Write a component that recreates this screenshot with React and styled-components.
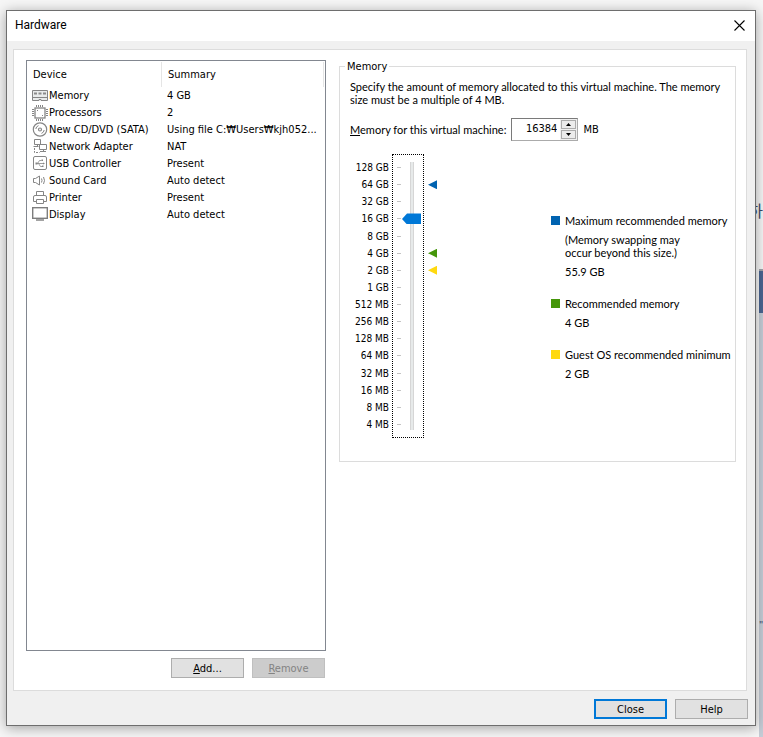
import React, { useState } from 'react'
import styled, { createGlobalStyle } from 'styled-components'

const GB = 1024

const devices = [
    { name: 'Memory', summary: '4 GB', icon: MemoryIcon },
    { name: 'Processors', summary: '2', icon: CpuIcon },
    { name: 'New CD/DVD (SATA)', summary: 'Using file C:₩Users₩kjh052...', icon: DiscIcon },
    { name: 'Network Adapter', summary: 'NAT', icon: NetworkIcon },
    { name: 'USB Controller', summary: 'Present', icon: UsbIcon },
    { name: 'Sound Card', summary: 'Auto detect', icon: SoundIcon },
    { name: 'Printer', summary: 'Present', icon: PrinterIcon },
    { name: 'Display', summary: 'Auto detect', icon: DisplayIcon },
]

// one entry per slider step, biggest on top
const steps = [
    { label: '128 GB' },
    { label: '64 GB', marker: '#0063b1' },
    { label: '32 GB' },
    { label: '16 GB' },
    { label: '8 GB' },
    { label: '4 GB', marker: '#45960a' },
    { label: '2 GB', marker: '#ffd90f' },
    { label: '1 GB' },
    { label: '512 MB' },
    { label: '256 MB' },
    { label: '128 MB' },
    { label: '64 MB' },
    { label: '32 MB' },
    { label: '16 MB' },
    { label: '8 MB' },
    { label: '4 MB' },
]

function App() {
    const [memory, setMemory] = useState(16 * GB)

    const changeMemory = (value) => setMemory(Math.min(128 * GB, Math.max(4, value)))

    return (
        <Desktop>
            <GlobalStyle />
            <Window>
                <TitleBar>
                    <Title>Hardware</Title>
                    <CloseIconButton aria-label="Close window">
                        <svg width="11" height="11" viewBox="0 0 11 11" stroke="#000" strokeWidth="1.1">
                            <path d="M0.5 0.5L10.5 10.5M10.5 0.5L0.5 10.5" />
                        </svg>
                    </CloseIconButton>
                </TitleBar>

                <Panel>
                    <DeviceColumn>
                        <DeviceList>
                            <DeviceTable>
                                <thead>
                                    <tr>
                                        <HeadCell $width={135}>Device</HeadCell>
                                        <HeadCell>Summary</HeadCell>
                                    </tr>
                                </thead>
                                <tbody>
                                    {devices.map(({ name, summary, icon: Icon }) => (
                                        <tr key={name}>
                                            <Cell>
                                                <DeviceName><Icon />{name}</DeviceName>
                                            </Cell>
                                            <Cell>{summary}</Cell>
                                        </tr>
                                    ))}
                                </tbody>
                            </DeviceTable>
                        </DeviceList>
                        <ButtonRow>
                            <Button><u>A</u>dd...</Button>
                            <Button disabled><u>R</u>emove</Button>
                        </ButtonRow>
                    </DeviceColumn>

                    <Group>
                        <legend>Memory</legend>
                        <Description>
                            Specify the amount of memory allocated to this virtual machine. The memory size must be a multiple of 4 MB.
                        </Description>
                        <MemoryRow>
                            <MemoryLabel htmlFor="memory"><u>M</u>emory for this virtual machine:</MemoryLabel>
                            <Spinner>
                                <SpinnerInput
                                    id="memory"
                                    value={memory}
                                    onChange={(e) => setMemory(Number(e.target.value) || 0)}
                                />
                                <SpinnerButtons>
                                    <SpinnerButton aria-label="Increase" onClick={() => changeMemory(memory + 4)}>
                                        <svg width="5" height="3" viewBox="0 0 5 3"><path d="M0 3L2.5 0L5 3Z" /></svg>
                                    </SpinnerButton>
                                    <SpinnerButton aria-label="Decrease" onClick={() => changeMemory(memory - 4)}>
                                        <svg width="5" height="3" viewBox="0 0 5 3"><path d="M0 0L2.5 3L5 0Z" /></svg>
                                    </SpinnerButton>
                                </SpinnerButtons>
                            </Spinner>
                            <span>MB</span>
                        </MemoryRow>

                        <MemoryBody>
                            <Scale>
                                <ScaleColumn $width={39} $align="flex-end">
                                    {steps.map(({ label }) => <ScaleItem key={label}>{label}</ScaleItem>)}
                                </ScaleColumn>
                                <SliderBox>
                                    <ScaleColumn>
                                        {steps.map(({ label }) => <ScaleItem key={label}><Tick /></ScaleItem>)}
                                    </ScaleColumn>
                                    <Slider
                                        type="range"
                                        min="2"
                                        max="17"
                                        step="1"
                                        aria-label="Memory size"
                                        value={Math.round(Math.log2(memory || 4))}
                                        onChange={(e) => setMemory(2 ** Number(e.target.value))}
                                    />
                                </SliderBox>
                                <ScaleColumn $width={10} $align="flex-end">
                                    {steps.map(({ label, marker }) => (
                                        <ScaleItem key={label}>{marker && <Marker $color={marker} />}</ScaleItem>
                                    ))}
                                </ScaleColumn>
                            </Scale>

                            <Hints>
                                <Hint>
                                    <HintTitle><Swatch $color="#0063b1" />Maximum recommended memory</HintTitle>
                                    <HintText>(Memory swapping may<br />occur beyond this size.)</HintText>
                                    <HintText>55.9 GB</HintText>
                                </Hint>
                                <Hint>
                                    <HintTitle><Swatch $color="#45960a" />Recommended memory</HintTitle>
                                    <HintText>4 GB</HintText>
                                </Hint>
                                <Hint>
                                    <HintTitle><Swatch $color="#ffd90f" />Guest OS recommended minimum</HintTitle>
                                    <HintText>2 GB</HintText>
                                </Hint>
                            </Hints>
                        </MemoryBody>
                    </Group>
                </Panel>

                <Footer>
                    <Button $primary>Close</Button>
                    <Button>Help</Button>
                </Footer>
            </Window>

            <Behind>
                <BehindPage><span>하</span></BehindPage>
                <BehindBar />
                <BehindBody>"</BehindBody>
            </Behind>
        </Desktop>
    )
}

export default App

function MemoryIcon() {
    return (
        <svg width="16" height="16" viewBox="0 0 16 16">
            <path d="M0.5 2.500h15v10h-6.500v-1h-2v1h-6.500z" fill="#e9ebeb" stroke="#858585" />
            <path d="M0.500 9.500h15" stroke="#858585" />
            <path d="M2 5.500h3M6.500 5.500h3M11 5.500h3" stroke="#8a8a8a" strokeWidth="2" />
        </svg>
    )
}

function CpuIcon() {
    return (
        <svg width="16" height="16" viewBox="0 0 16 16" fill="none" stroke="#858585">
            <rect x="3" y="3" width="10" height="10" strokeWidth="1.300" />
            <path d="M4.500 0v2M6.500 0v2M8.500 0v2M10.500 0v2M4.500 14v2M6.500 14v2M8.500 14v2M10.500 14v2" />
            <path d="M0 4.500h2M0 6.500h2M0 8.500h2M0 10.500h2M14 4.500h2M14 6.500h2M14 8.500h2M14 10.500h2" />
            <path d="M5 5.500h1M10 10.500h1" />
        </svg>
    )
}

function DiscIcon() {
    return (
        <svg width="16" height="16" viewBox="0 0 16 16" fill="none" stroke="#858585">
            <circle cx="8" cy="7.500" r="6.700" strokeWidth="1.200" />
            <circle cx="8" cy="7.500" r="1.500" strokeWidth="1.200" />
            <path d="M3.800 7A4.200 4.200 0 0 1 6.500 3.600M12.200 8A4.200 4.200 0 0 1 9.500 11.400" />
        </svg>
    )
}

function NetworkIcon() {
    return (
        <svg width="16" height="16" viewBox="0 0 16 16" fill="none" stroke="#858585">
            <path d="M2.500 0.500h6v5h-6zM5.500 5.500v2M1.500 7.500h5" />
            <path d="M7.500 5.500h7v5h-7zM11.500 10.500v2M8 12.500h6" fill="#fff" />
            <path d="M2.500 9v4.500h5" strokeDasharray="2 1" />
        </svg>
    )
}

function UsbIcon() {
    return (
        <svg width="16" height="16" viewBox="0 0 16 16" fill="none" stroke="#858585">
            <rect x="1.500" y="0.500" width="13" height="13" rx="1.500" />
            <path d="M4 7.500h8M5.500 7.500L7.500 4.500h2M6.500 7.500L8.500 10.500h2" strokeWidth="0.800" />
            <path d="M3.500 6.500h2v2h-2zM9.500 3.500h1.500v1.500h-1.500zM10 9.500h1.500v1.500h-1.500zM11 6.500l2 1l-2 1z" fill="#858585" stroke="none" />
        </svg>
    )
}

function SoundIcon() {
    return (
        <svg width="16" height="16" viewBox="0 0 16 16" fill="none" stroke="#858585">
            <path d="M1.500 5.500v4h2L7.500 12V3L3.500 5.500z" />
            <path d="M9.500 5.500q1 2 0 4M11.500 4q2 3.500 0 7" />
        </svg>
    )
}

function PrinterIcon() {
    return (
        <svg width="16" height="16" viewBox="0 0 16 16" fill="none" stroke="#858585">
            <path d="M4.500 5.500V1.500h7V5.500M4 11.500H1.500v-4.500q0 -1.500 1.500 -1.500h10q1.500 0 1.500 1.500v4.500H12" />
            <path d="M4.500 9.500h7v4h-7z" />
        </svg>
    )
}

function DisplayIcon() {
    return (
        <svg width="16" height="16" viewBox="0 0 16 16" fill="none" stroke="#7d7d7d">
            <rect x="0.700" y="0.700" width="14.600" height="10.600" fill="#fff" strokeWidth="1.400" />
            <path d="M4 13h8" strokeWidth="1.400" />
        </svg>
    )
}

const textFont = 'Lato, "Liberation Sans", sans-serif'

const GlobalStyle = createGlobalStyle`
    * {
        box-sizing: border-box;
    }

    body {
        margin: 0;
        background: #f6f6f6;
        color: #000;
        font-family: "DejaVu Sans Condensed", "DejaVu Sans", sans-serif;
        font-size: 11px;
        line-height: 13px;
    }

    button, input {
        font: inherit;
        color: inherit;
    }
`;

const Desktop = styled.div`
    display: flex;
    min-height: 100vh;
    padding-left: 6px;
    overflow: hidden;
`;

const Window = styled.main`
    flex: 1;
    min-width: 0;
    display: flex;
    flex-direction: column;
    margin: 10px 0 11px;
    border: 1px solid #6e6e6e;
    background: #f0f0f0;
    box-shadow: 0 2px 12px rgba(0, 0, 0, 0.35);
    z-index: 1;
`;

const TitleBar = styled.header`
    display: flex;
    align-items: center;
    justify-content: space-between;
    height: 30px;
    padding: 0 10px 1px 8px;
    background: #fff;
`;

const Title = styled.h1`
    margin: 0;
    font-family: Roboto, sans-serif;
    font-size: 12px;
    font-weight: 400;
`;

const CloseIconButton = styled.button`
    display: flex;
    padding: 0;
    border: 0;
    background: none;
`;

const Panel = styled.section`
    flex: 1;
    display: flex;
    gap: 13px;
    margin: 8px 8px 0 6px;
    padding: 10px 10px 12px 12px;
    border: 1px solid #dcdcdc;
    background: #fff;
`;

const DeviceColumn = styled.div`
    flex: 0 0 300px;
    display: flex;
    flex-direction: column;
    gap: 7px;
`;

const DeviceList = styled.div`
    flex: 1;
    padding: 1px 1px 0 0;
    border: 1px solid #828790;
`;

const DeviceTable = styled.table`
    width: 100%;
    table-layout: fixed;
    border-collapse: separate;
    border-spacing: 0;
`;

const HeadCell = styled.th`
    width: ${props => props.$width ? `${props.$width}px` : 'auto'};
    height: 25px;
    padding: 0 0 1px 6px;
    border-right: 1px solid #e5e5e5;
    font-weight: 400;
    text-align: left;
`;

const Cell = styled.td`
    height: 17px;
    padding: 0 0 0 5px;
    white-space: nowrap;
`;

const DeviceName = styled.div`
    display: flex;
    align-items: center;
    gap: 1px;
    height: 17px;

    svg {
        flex: none;
    }
`;

const ButtonRow = styled.div`
    display: flex;
    justify-content: flex-end;
    gap: 8px;
    padding-right: 1px;
`;

const Button = styled.button`
    width: 73px;
    height: 20px;
    padding: 0;
    border: ${props => props.$primary ? '2px solid #0078d7' : '1px solid #adadad'};
    background: #e1e1e1;

    &:disabled {
        border-color: #bfbfbf;
        background: #ccc;
        color: #838383;
    }
`;

const Group = styled.fieldset`
    flex: 1;
    min-width: 0;
    align-self: flex-start;
    margin: 0;
    padding: 7px 11px 23px 10px;
    border: 1px solid #dcdcdc;

    legend {
        margin-left: -5px;
        padding: 0 2px;
    }
`;

const Description = styled.p`
    margin: 0;
    font-family: ${textFont};
`;

const MemoryRow = styled.div`
    display: flex;
    align-items: center;
    gap: 5px;
    margin-top: 12px;
`;

const MemoryLabel = styled.label`
    flex: 0 0 156px;
    font-family: ${textFont};
    white-space: nowrap;
`;

const Spinner = styled.div`
    display: flex;
    width: 67px;
    height: 23px;
    border: 1px solid #7a7a7a;
    border-right-color: #ababab;
    border-bottom-color: #ababab;
    background: #fff;
`;

const SpinnerInput = styled.input`
    flex: 1;
    min-width: 0;
    padding: 0 3px 2px 0;
    border: 0;
    outline: 0;
    background: none;
    text-align: right;
`;

const SpinnerButtons = styled.div`
    display: flex;
    flex-direction: column;
    padding: 1px;
    gap: 1px;
    background: #f0f0f0;
`;

const SpinnerButton = styled.button`
    flex: 1;
    display: flex;
    align-items: center;
    justify-content: center;
    width: 15px;
    padding: 0;
    border: 1px solid #acacac;
    background: #ececec;
`;

const MemoryBody = styled.div`
    display: flex;
    justify-content: space-between;
    margin-top: 13px;
`;

const Scale = styled.div`
    display: flex;
    gap: 3px;
    font-size: 10px;
`;

const ScaleColumn = styled.div`
    display: flex;
    flex-direction: column;
    justify-content: space-between;
    align-items: ${props => props.$align || 'flex-start'};
    width: ${props => props.$width || 4}px;
    height: 274px;
    margin: 5px 0;
`;

const ScaleItem = styled.div`
    display: flex;
    align-items: center;
    height: 17px;
    white-space: nowrap;
`;

const Tick = styled.span`
    width: 4px;
    height: 1px;
    background: #c4c4c4;
`;

const Marker = styled.span`
    width: 9px;
    height: 9px;
    background: ${props => props.$color};
    clip-path: polygon(0 50%, 100% 0, 100% 100%);
`;

const SliderBox = styled.div`
    display: flex;
    align-items: center;
    gap: 1px;
    width: 32px;
    height: 284px;
    padding-left: 4px;
    border: 1px dotted #000;
`;

const Slider = styled.input`
    appearance: none;
    writing-mode: vertical-lr;
    direction: rtl;
    width: 19px;
    height: 268px;
    margin: 0;
    outline: 0;
    background: linear-gradient(to right, #d6d6d6 1px, #e7eaea 1px 3px, #d6d6d6 3px) 8px 0 / 4px 100% no-repeat;

    &::-webkit-slider-thumb {
        appearance: none;
        width: 19px;
        height: 11px;
        background: #0078d7;
        clip-path: polygon(0 50%, 5px 0, 100% 0, 100% 100%, 5px 100%);
    }
`;

const Hints = styled.div`
    display: flex;
    flex-direction: column;
    gap: 19px;
    width: 173px;
    padding-top: 60px;
    font-family: ${textFont};
`;

const Hint = styled.div`
    display: flex;
    flex-direction: column;
    gap: 6px;
`;

const HintTitle = styled.div`
    display: flex;
    align-items: center;
    gap: 5px;
    white-space: nowrap;
`;

const HintText = styled.div`
    padding-left: 14px;
`;

const Swatch = styled.span`
    flex: none;
    width: 9px;
    height: 9px;
    background: ${props => props.$color};
`;

const Footer = styled.footer`
    display: flex;
    justify-content: flex-end;
    gap: 8px;
    padding: 8px 7px 6px;
`;

const Behind = styled.div`
    flex: 0 0 7px;
    display: flex;
    flex-direction: column;
    overflow: hidden;
    padding-left: 3px;
    font-family: "Noto Sans CJK KR", sans-serif;
    font-size: 16px;
    line-height: 20px;
    color: #3b4a66;
`;

const BehindPage = styled.div`
    display: flex;
    justify-content: flex-end;
    height: 271px;
    padding-top: 200px;
    border-bottom: 2px solid #a0a4aa;
`;

const BehindBar = styled.div`
    height: 42px;
    background: #4a6591;
`;

const BehindBody = styled.div`
    flex: 1;
    padding-top: 302px;
    background: #c5ccd6;
    font-size: 9px;
`;
